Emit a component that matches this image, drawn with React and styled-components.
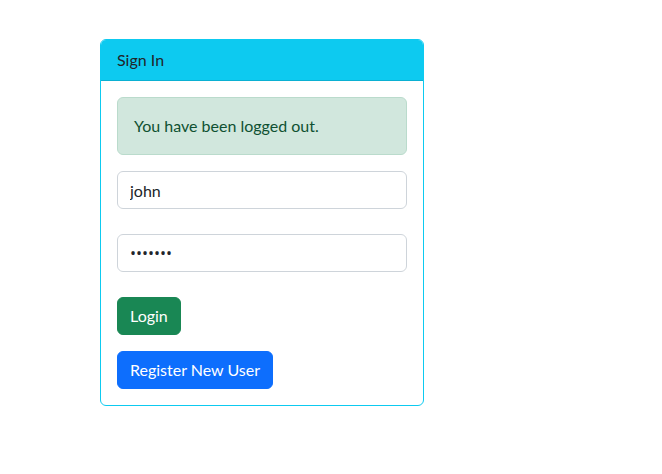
import React from "react";
import styled, { createGlobalStyle } from "styled-components";

const GlobalStyle = createGlobalStyle`
  * { box-sizing: border-box; }
  body {
    margin: 0;
    background: #fff;
    font-family: "Segoe UI", Lato, sans-serif;
    font-size: 16px;
    line-height: 1.5;
    color: #212529;
  }
`;

const Page = styled.div`
  padding: 39px 0 0 100px;
`;

const Card = styled.div`
  width: 324px;
  border: 1px solid #0dcaf0;
  border-radius: 6px;
  overflow: hidden;
  background: #fff;
`;

const CardHeader = styled.div`
  padding: 8px 16px;
  background: #0dcaf0;
  border-bottom: 1px solid rgba(0, 0, 0, 0.125);
  color: #212529;
`;

const CardBody = styled.div`
  padding: 16px;
  display: flex;
  flex-direction: column;
  align-items: flex-start;
`;

const Alert = styled.div`
  width: 100%;
  padding: 16px;
  margin-bottom: 16px;
  background: #d1e7dd;
  border: 1px solid #badbcc;
  border-radius: 6px;
  color: #0f5132;
`;

const Input = styled.input`
  display: block;
  width: 100%;
  height: 38px;
  padding: 6px 12px;
  margin-bottom: 25px;
  font: inherit;
  font-family: ${({ type }) =>
    type === "password" ? '"Segoe UI", "Open Sans", sans-serif' : "inherit"};
  color: #212529;
  background: #fff;
  border: 1px solid #ced4da;
  border-radius: 6px;
  outline: none;
`;

const Button = styled.button`
  height: 38px;
  padding: 6px 12px;
  margin-bottom: ${({ $mb }) => $mb}px;
  font: inherit;
  color: #fff;
  background: ${({ $bg }) => $bg};
  border: 1px solid ${({ $bg }) => $bg};
  border-radius: 6px;
  cursor: pointer;
`;

export default function App() {
  return (
    <>
      <GlobalStyle />
      <Page>
        <Card>
          <CardHeader>Sign In</CardHeader>
          <CardBody>
            <Alert>You have been logged out.</Alert>
            <Input defaultValue="john" />
            <Input type="password" defaultValue="1234567" />
            <Button $mb={16} $bg="#198754">Login</Button>
            <Button $mb={0} $bg="#0d6efd">Register New User</Button>
          </CardBody>
        </Card>
      </Page>
    </>
  );
}
